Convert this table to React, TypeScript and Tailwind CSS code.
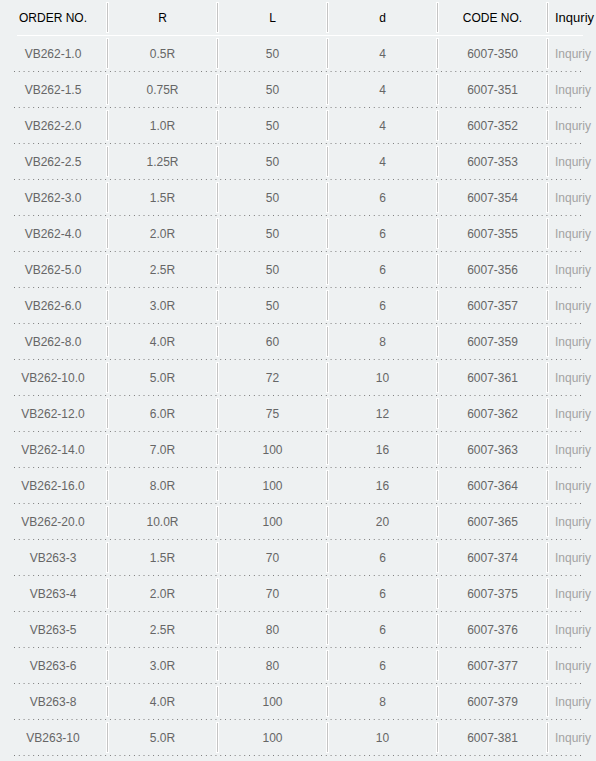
const rows: [string, string, string, string, string][] = [
  ["VB262-1.0", "0.5R", "50", "4", "6007-350"],
  ["VB262-1.5", "0.75R", "50", "4", "6007-351"],
  ["VB262-2.0", "1.0R", "50", "4", "6007-352"],
  ["VB262-2.5", "1.25R", "50", "4", "6007-353"],
  ["VB262-3.0", "1.5R", "50", "6", "6007-354"],
  ["VB262-4.0", "2.0R", "50", "6", "6007-355"],
  ["VB262-5.0", "2.5R", "50", "6", "6007-356"],
  ["VB262-6.0", "3.0R", "50", "6", "6007-357"],
  ["VB262-8.0", "4.0R", "60", "8", "6007-359"],
  ["VB262-10.0", "5.0R", "72", "10", "6007-361"],
  ["VB262-12.0", "6.0R", "75", "12", "6007-362"],
  ["VB262-14.0", "7.0R", "100", "16", "6007-363"],
  ["VB262-16.0", "8.0R", "100", "16", "6007-364"],
  ["VB262-20.0", "10.0R", "100", "20", "6007-365"],
  ["VB263-3", "1.5R", "70", "6", "6007-374"],
  ["VB263-4", "2.0R", "70", "6", "6007-375"],
  ["VB263-5", "2.5R", "80", "6", "6007-376"],
  ["VB263-6", "3.0R", "80", "6", "6007-377"],
  ["VB263-8", "4.0R", "100", "8", "6007-379"],
  ["VB263-10", "5.0R", "100", "10", "6007-381"],
];

function Divider() {
  return (
    <div className="mt-[2px] h-[31px] w-[3px] shrink-0 bg-white p-px">
      <div className="h-full w-full bg-[#c4c4c4]" />
    </div>
  );
}

function Row({ cells, head }: { cells: string[]; head?: boolean }) {
  const color = head ? "text-black" : "text-[#666]";
  return (
    <div className="flex h-[35px] w-[583px]">
      <div className={`flex w-[106px] shrink-0 items-center justify-center ${color}`}>
        {cells[0]}
      </div>
      {cells.slice(1, 5).map((c, i) => (
        <div key={i} className="flex w-[110px] shrink-0">
          <Divider />
          <div className={`flex flex-1 items-center justify-center ${color}`}>{c}</div>
        </div>
      ))}
      <div className="flex w-[37px] shrink-0">
        <Divider />
        <div
          className={`flex items-center whitespace-nowrap pl-[6px] ${
            head ? "text-[13px] text-black" : "text-[#a3a3a3]"
          }`}
        >
          Inquriy
        </div>
      </div>
    </div>
  );
}

export default function App() {
  return (
    <main className="min-h-screen overflow-hidden bg-[#eef1f2] font-['Liberation_Sans',Arial,sans-serif] text-[12px]">
      <Row head cells={["ORDER NO.", "R", "L", "d", "CODE NO."]} />
      <div className="ml-[17px] h-px w-[566px] bg-white" />
      {rows.map((r) => (
        <div key={r[0]}>
          <Row cells={r} />
          <div className="ml-[14px] h-px w-[569px] bg-[linear-gradient(to_right,#7a7a7a_1px,transparent_1px)] bg-[length:4.8px_1px]" />
        </div>
      ))}
    </main>
  );
}
